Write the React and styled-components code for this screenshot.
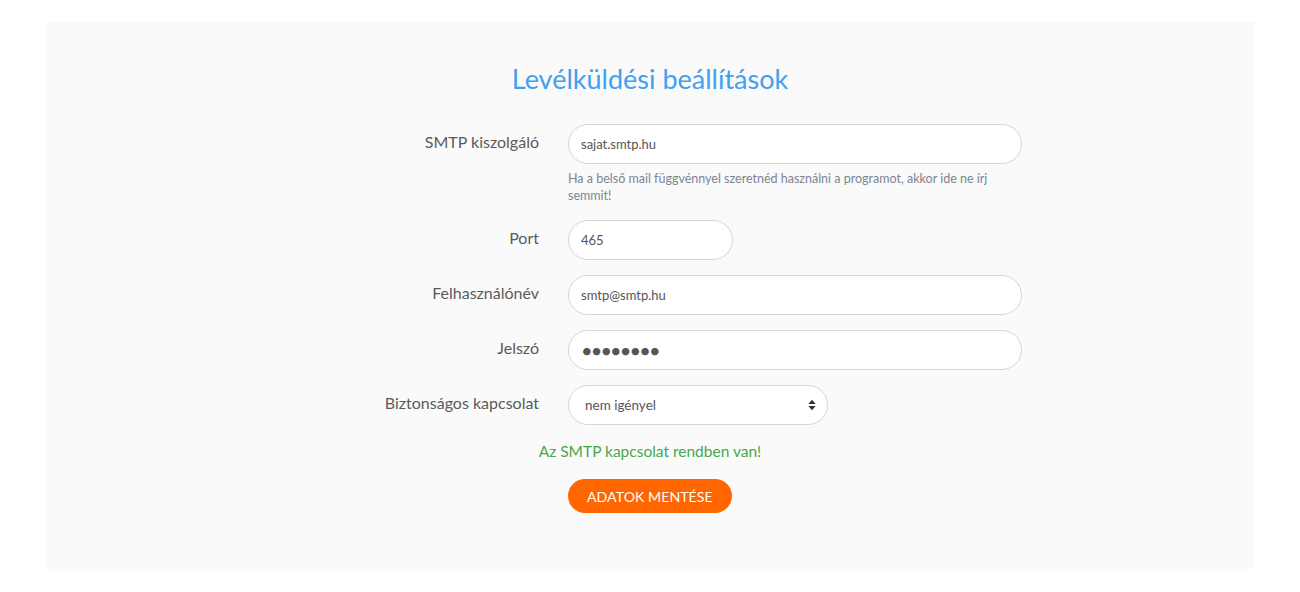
import React from 'react'
import styled, { createGlobalStyle } from 'styled-components'

const GlobalStyle = createGlobalStyle`
    html, body {
        margin: 0;
        background: #ffffff;
    }
    body {
        padding: 22px 45px 23px;
        font-family: Lato, "Open Sans", sans-serif;
    }
`;

function App() {
    return (
        <>
            <GlobalStyle />
            <Panel>
                <Title>Levélküldési beállítások</Title>
                <Form onSubmit={(e) => e.preventDefault()}>
                    <Row>
                        <Label htmlFor='smtp-host'>SMTP kiszolgáló</Label>
                        <Control>
                            <Input id='smtp-host' type='text' defaultValue='sajat.smtp.hu' />
                            <Help>
                                Ha a belső mail függvénnyel szeretnéd használni a programot, akkor ide ne írj
                                semmit!
                            </Help>
                        </Control>
                    </Row>
                    <Row>
                        <Label htmlFor='smtp-port'>Port</Label>
                        <Control>
                            <Input id='smtp-port' type='text' defaultValue='465' $width={165} />
                        </Control>
                    </Row>
                    <Row>
                        <Label htmlFor='smtp-user'>Felhasználónév</Label>
                        <Control>
                            <Input id='smtp-user' type='text' defaultValue='smtp@smtp.hu' />
                        </Control>
                    </Row>
                    <Row>
                        <Label htmlFor='smtp-pass'>Jelszó</Label>
                        <Control>
                            <Input id='smtp-pass' type='password' defaultValue='12345678' $password />
                        </Control>
                    </Row>
                    <Row>
                        <Label htmlFor='smtp-secure'>Biztonságos kapcsolat</Label>
                        <Control>
                            <SelectWrap>
                                <Select id='smtp-secure' defaultValue='none'>
                                    <option value='none'>nem igényel</option>
                                    <option value='ssl'>SSL</option>
                                    <option value='tls'>TLS</option>
                                </Select>
                                <Caret viewBox='0 0 8 12' aria-hidden='true'>
                                    <path d='M4 0.8 L7.6 5 L0.4 5 Z' fill='#333' />
                                    <path d='M4 11.2 L7.6 7 L0.4 7 Z' fill='#333' />
                                </Caret>
                            </SelectWrap>
                        </Control>
                    </Row>
                    <Success>Az SMTP kapcsolat rendben van!</Success>
                    <Row>
                        <span />
                        <Control>
                            <SaveButton type='submit'>Adatok mentése</SaveButton>
                        </Control>
                    </Row>
                </Form>
            </Panel>
        </>
    )
}

export default App

const Panel = styled.main`
    background: #fafafa;
    height: 547px;
    box-sizing: border-box;
    padding-top: 40px;
`;

const Title = styled.h1`
    margin: 0 0 29px;
    text-align: center;
    font-size: 27px;
    line-height: 33px;
    font-weight: 400;
    color: #42a0f0;
`;

const Form = styled.form`
    display: flex;
    flex-direction: column;
    gap: 15px;
`;

const Row = styled.div`
    display: grid;
    grid-template-columns: 494px 1fr;
    column-gap: 29px;
    align-items: start;
`;

const Label = styled.label`
    padding-top: 8px;
    text-align: right;
    font-size: 16px;
    line-height: 20px;
    color: #5a5a5a;
`;

const Control = styled.div`
    display: flex;
    flex-direction: column;
    align-items: flex-start;
`;

const Input = styled.input`
    box-sizing: border-box;
    width: ${(p) => p.$width || 454}px;
    height: 40px;
    padding: 0 12px;
    border: 1px solid #d3d6db;
    border-radius: 20px;
    background: #fff;
    font-family: Lato, "Open Sans", sans-serif;
    font-size: ${(p) => (p.$password ? '20px' : '13px')};
    letter-spacing: ${(p) => (p.$password ? '-1.9px' : 'normal')};
    color: #555;
    outline: none;
`;

const Help = styled.p`
    margin: 6px 0 1px;
    width: 454px;
    font-size: 12.5px;
    line-height: 17px;
    color: #7b8591;
`;

const SelectWrap = styled.div`
    position: relative;
    width: 260px;
`;

const Select = styled.select`
    appearance: none;
    box-sizing: border-box;
    width: 100%;
    height: 40px;
    padding: 0 30px 0 16px;
    border: 1px solid #d3d6db;
    border-radius: 20px;
    background: #fff;
    font-family: Lato, "Open Sans", sans-serif;
    font-size: 13.5px;
    color: #555;
    outline: none;
`;

const Caret = styled.svg`
    position: absolute;
    right: 12px;
    top: 14px;
    width: 8px;
    height: 12px;
    pointer-events: none;
`;

const Success = styled.p`
    margin: 1px 0 3px;
    text-align: center;
    font-size: 15.5px;
    line-height: 20px;
    color: #47a84b;
`;

const SaveButton = styled.button`
    height: 34px;
    padding: 0 19px;
    border: none;
    border-radius: 17px;
    background: #ff6600;
    color: #fff;
    font-family: Lato, "Open Sans", sans-serif;
    font-size: 14.2px;
    text-transform: uppercase;
    cursor: pointer;
`;
